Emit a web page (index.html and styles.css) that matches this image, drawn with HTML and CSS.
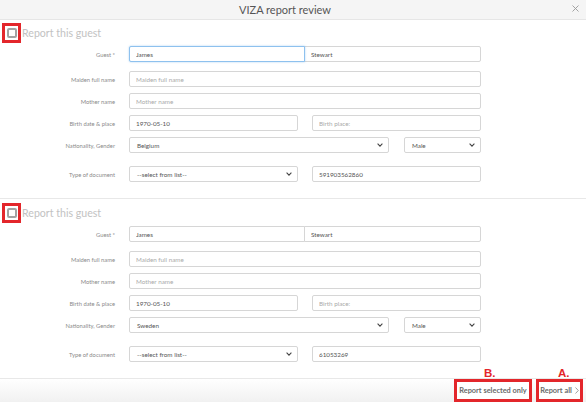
FILE: index.html
```html
<html>
<head>
<link rel="stylesheet" href="styles.css">
</head>
<body>

<header class="modal-head">
  <h1>VIZA report review</h1>
  <span class="close"><svg width="7" height="7" viewBox="0 0 7 7"><path d="M0.5 0.5L6.5 6.5M6.5 0.5L0.5 6.5" stroke="#9a9a9a" stroke-width="0.9" fill="none"/></svg></span>
</header>

<section class="guest">
  <div class="guest-head"><span class="mark"><span class="check"></span></span><span class="guest-title">Report this guest</span></div>

  <div class="row row-guest">
    <label>Guest *</label>
    <div class="fields pair"><input class="inp focus" value="James"><input class="inp" value="Stewart"></div>
  </div>
  <div class="row">
    <label>Maiden full name</label>
    <div class="fields"><input class="inp" placeholder="Maiden full name"></div>
  </div>
  <div class="row">
    <label>Mother name</label>
    <div class="fields"><input class="inp" placeholder="Mother name"></div>
  </div>
  <div class="row">
    <label>Birth date &amp; place</label>
    <div class="fields split"><input class="inp" value="1970-05-10"><input class="inp" placeholder="Birth place:"></div>
  </div>
  <div class="row row-nat">
    <label>Nationality, Gender</label>
    <div class="fields nat">
      <div class="sel"><span>Belgium</span><svg width="6" height="4" viewBox="0 0 6 4"><path d="M0.6 0.7L3 3.1L5.4 0.7" stroke="#444" stroke-width="1.1" fill="none"/></svg></div>
      <div class="sel"><span>Male</span><svg width="6" height="4" viewBox="0 0 6 4"><path d="M0.6 0.7L3 3.1L5.4 0.7" stroke="#444" stroke-width="1.1" fill="none"/></svg></div>
    </div>
  </div>
  <div class="row row-last">
    <label>Type of document</label>
    <div class="fields split">
      <div class="sel"><span>--select from list--</span><svg width="6" height="4" viewBox="0 0 6 4"><path d="M0.6 0.7L3 3.1L5.4 0.7" stroke="#444" stroke-width="1.1" fill="none"/></svg></div>
      <input class="inp" value="591903562860">
    </div>
  </div>
</section>

<section class="guest">
  <div class="guest-head"><span class="mark"><span class="check"></span></span><span class="guest-title">Report this guest</span></div>

  <div class="row row-guest">
    <label>Guest *</label>
    <div class="fields pair"><input class="inp" value="James"><input class="inp" value="Stewart"></div>
  </div>
  <div class="row">
    <label>Maiden full name</label>
    <div class="fields"><input class="inp" placeholder="Maiden full name"></div>
  </div>
  <div class="row">
    <label>Mother name</label>
    <div class="fields"><input class="inp" placeholder="Mother name"></div>
  </div>
  <div class="row">
    <label>Birth date &amp; place</label>
    <div class="fields split"><input class="inp" value="1970-05-10"><input class="inp" placeholder="Birth place:"></div>
  </div>
  <div class="row row-nat">
    <label>Nationality, Gender</label>
    <div class="fields nat">
      <div class="sel"><span>Sweden</span><svg width="6" height="4" viewBox="0 0 6 4"><path d="M0.6 0.7L3 3.1L5.4 0.7" stroke="#444" stroke-width="1.1" fill="none"/></svg></div>
      <div class="sel"><span>Male</span><svg width="6" height="4" viewBox="0 0 6 4"><path d="M0.6 0.7L3 3.1L5.4 0.7" stroke="#444" stroke-width="1.1" fill="none"/></svg></div>
    </div>
  </div>
  <div class="row row-last">
    <label>Type of document</label>
    <div class="fields split">
      <div class="sel"><span>--select from list--</span><svg width="6" height="4" viewBox="0 0 6 4"><path d="M0.6 0.7L3 3.1L5.4 0.7" stroke="#444" stroke-width="1.1" fill="none"/></svg></div>
      <input class="inp" value="61053269">
    </div>
  </div>
</section>

<footer class="modal-foot">
  <button class="btn btn-b"><span class="tag">B.</span>Report selected only</button>
  <button class="btn btn-a"><span class="tag">A.</span>Report all <svg width="4" height="7" viewBox="0 0 4 7"><path d="M0.5 0.5L3.3 3.5L0.5 6.5" stroke="#888" stroke-width="0.8" fill="none"/></svg></button>
</footer>

</body>
</html>
```

FILE: styles.css
```css
body        { margin:0;font-family:Lato,"Liberation Sans",sans-serif;background:#fff;color:#555 }

.modal-head { height:20px;box-sizing:border-box;background:#f5f5f5;border-bottom:1px solid #e6e6e6;
              display:flex;align-items:center;justify-content:center;position:relative }
.modal-head h1 { margin:0 16px 0 0;font-size:11px;font-weight:400;color:#555 }
.close      { position:absolute;right:7px;top:5px;line-height:0 }

.guest      { padding:3px 0 10px 0;border-bottom:1px solid #e8e8e8 }
.guest + .guest { padding-top:4px }
.guest-head { display:flex;align-items:center;height:20px;margin-bottom:3px }
.mark       { width:19px;height:20px;box-sizing:border-box;border:3px solid #e3262b;margin-left:2px;
              display:flex;align-items:center;justify-content:center }
.check      { width:10px;height:10px;box-sizing:border-box;border:2px solid #a3a3a3;border-radius:2px }
.guest-title { font-size:10.6px;color:#c2c2c2;margin-left:1px }

.row        { display:grid;grid-template-columns:115px 352px;column-gap:14px;align-items:center;
              height:16px;margin-bottom:6px }
.row-guest  { margin-bottom:9px }
.row-nat    { margin-bottom:13px }
.row label  { text-align:right;font-size:5.8px;color:#8a8a8a }

.fields     { display:grid;grid-template-columns:1fr;height:16px }
.pair       { grid-template-columns:1fr 1fr }
.pair .inp + .inp { margin-left:-1px }
.split      { grid-template-columns:1fr 1fr;column-gap:14px }
.nat        { grid-template-columns:1fr 77px;column-gap:15px }

.inp        { height:16px;box-sizing:border-box;border:1px solid #d6d6d6;border-radius:2px;padding:0 0 0 6px;
              font-family:Lato,"Liberation Sans",sans-serif;font-size:6.3px;color:#555;min-width:0;outline:none;background:#fff }
.inp::placeholder { color:#aaa }
.pair .inp:first-child { border-radius:2px 0 0 2px }
.pair .inp:last-child  { border-radius:0 2px 2px 0 }
.inp.focus  { border-color:#8ec1ee;box-shadow:0 0 2px rgba(102,175,233,0.6);position:relative;z-index:1 }

.sel        { height:16px;box-sizing:border-box;border:1px solid #d6d6d6;border-radius:2px;padding:0 5px 0 7px;
              display:flex;align-items:center;justify-content:space-between;font-size:6.3px;color:#555 }
.sel svg    { display:block }

.modal-foot { height:23px;display:flex;justify-content:flex-end;align-items:stretch;gap:4px;padding:0 3px 0 0;
              background:linear-gradient(#fff,#f1f1f1) }
.btn        { position:relative;box-sizing:border-box;border:3px solid #e3262b;background:#fff;margin:0;padding:0;
              font-family:Lato,"Liberation Sans",sans-serif;font-size:7.4px;font-weight:700;color:#6a6a6a;
              display:flex;align-items:center;justify-content:center;gap:3px }
.btn-b      { width:78px }
.btn-a      { width:47px }
.tag        { position:absolute;bottom:100%;margin-bottom:3px;font-family:"Liberation Sans",sans-serif;
              font-size:11.5px;font-weight:700;color:#e3262b }
.btn-b .tag { left:27px }
.btn-a .tag { left:19px }
```
